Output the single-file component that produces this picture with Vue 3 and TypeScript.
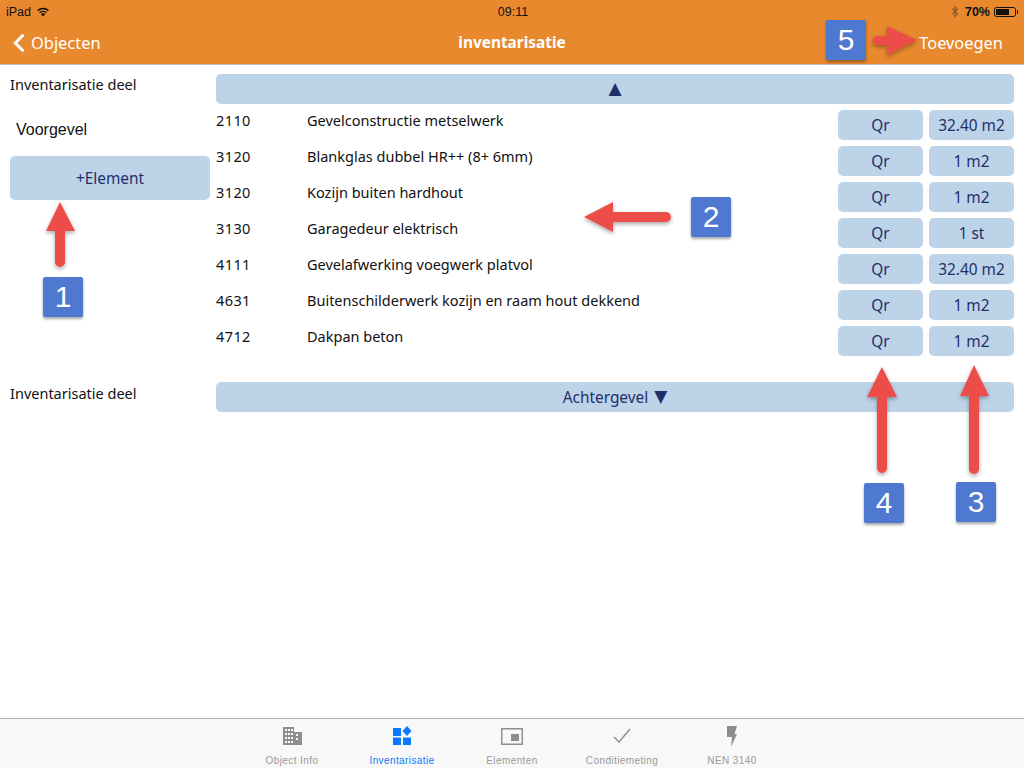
<script setup lang="ts">
interface Row { code: string; name: string; qty: string }
const rows: Row[] = [
  { code: '2110', name: 'Gevelconstructie metselwerk', qty: '32.40 m2' },
  { code: '3120', name: 'Blankglas dubbel HR++ (8+ 6mm)', qty: '1 m2' },
  { code: '3120', name: 'Kozijn buiten hardhout', qty: '1 m2' },
  { code: '3130', name: 'Garagedeur elektrisch', qty: '1 st' },
  { code: '4111', name: 'Gevelafwerking voegwerk platvol', qty: '32.40 m2' },
  { code: '4631', name: 'Buitenschilderwerk kozijn en raam hout dekkend', qty: '1 m2' },
  { code: '4712', name: 'Dakpan beton', qty: '1 m2' },
]
</script>

<template>
  <div class="page">
    <header class="header">
      <div class="status">
        <div class="st-left">
          <span>iPad</span>
          <svg width="14" height="10" viewBox="0 0 14 10"><path d="M7 9.6 4.9 7.2a3 3 0 0 1 4.2 0Z" fill="#111"/><path d="M3.6 5.8a4.9 4.9 0 0 1 6.8 0M1.6 3.6a7.8 7.8 0 0 1 10.8 0" fill="none" stroke="#111" stroke-width="1.5"/></svg>
        </div>
        <div class="st-time">09:11</div>
        <div class="st-right">
          <svg width="8" height="13" viewBox="0 0 8 13"><path d="M1 3.4 6.4 8.8 3.9 11.6V1.4L6.4 4.2 1 9.6" fill="none" stroke="#8a5a24" stroke-width="1.1"/></svg>
          <span class="pct">70%</span>
          <span class="battery"><span class="level"></span></span>
        </div>
      </div>
      <nav class="nav">
        <div class="back">
          <svg width="14" height="20" viewBox="0 0 14 20"><path d="M11.5 1.8 3.3 10l8.2 8.2" fill="none" stroke="#fff" stroke-width="3"/></svg>
          <span>Objecten</span>
        </div>
        <div class="title">inventarisatie</div>
        <div class="add">Toevoegen</div>
      </nav>
    </header>

    <main class="main">
      <aside class="side">
        <div class="side-label">Inventarisatie deel</div>
        <div class="side-name">Voorgevel</div>
        <div class="btn element">+Element</div>
        <div class="side-label second">Inventarisatie deel</div>
      </aside>
      <section class="content">
        <div class="btn bar top"><span class="tri">▲</span></div>
        <div class="rows">
          <div v-for="(r, i) in rows" :key="i" class="row">
            <span class="code">{{ r.code }}</span>
            <span class="name">{{ r.name }}</span>
            <div class="btn cell">Qr</div>
            <div class="btn cell">{{ r.qty }}</div>
          </div>
        </div>
        <div class="btn bar bottom">Achtergevel <span class="tri-small">▼</span></div>
      </section>
    </main>

    <footer class="tabs">
      <div class="tab">
        <svg width="22" height="20" viewBox="0 0 22 20"><path fill="#8e8e8e" fill-rule="evenodd" d="M2 1h11v5h8v13H2ZM4 3v2h2V3Zm3 0v2h2V3Zm3 0v2h2V3ZM4 7v2h2V7Zm3 0v2h2V7Zm3 0v2h2V7Zm5 1v2h2V8ZM4 11v2h2v-2Zm3 0v2h2v-2Zm3 0v2h2v-2Zm5 1v2h2v-2ZM4 15v2h2v-2Zm3 0v2h2v-2Zm3 0v2h2v-2Z"/></svg>
        <span>Object Info</span>
      </div>
      <div class="tab active">
        <svg width="22" height="20" viewBox="0 0 22 20"><path fill="#0a7aff" d="M2 2h8v8H2ZM2 11.500h8V19H2ZM12 11.500h8V19h-8ZM16 0l4.500 5-4.500 5-4.500-5Z"/></svg>
        <span>Inventarisatie</span>
      </div>
      <div class="tab">
        <svg width="22" height="20" viewBox="0 0 22 20"><path fill="#8e8e8e" fill-rule="evenodd" d="M0 2h22v17H0Zm1.500 1.500v14h19v-14ZM10 8h8v7h-8Z"/></svg>
        <span>Elementen</span>
      </div>
      <div class="tab">
        <svg width="22" height="20" viewBox="0 0 22 20"><path fill="none" stroke="#8e8e8e" stroke-width="1.500" d="m3 11 5 5L19 3"/></svg>
        <span>Conditiemeting</span>
      </div>
      <div class="tab">
        <svg width="22" height="20" viewBox="0 0 22 20"><path fill="#8e8e8e" d="M6 0h10l-2.500 8H16l-6 13 1-10H6Z"/></svg>
        <span>NEN 3140</span>
      </div>
    </footer>

    <svg class="arrows" width="1024" height="768" viewBox="0 0 1024 768">
      <defs>
        <filter id="sh" x="-30%" y="-30%" width="160%" height="160%">
          <feDropShadow dx="0" dy="2" stdDeviation="2" flood-color="#000" flood-opacity=".35"/>
        </filter>
      </defs>
      <g fill="#ec4e4a" filter="url(#sh)">
        <path d="M60 202 75 231H65V262a5 5 0 0 1-10 0V231H46Z"/>
        <path d="M882 367 897 397H887V468a5 5 0 0 1-10 0V397H867Z"/>
        <path d="M974 365 989 396H979V469a5 5 0 0 1-10 0V396H960Z"/>
        <path d="M584 217 613 202V212H666a5 5 0 0 1 0 10H613V232Z"/>
        <path d="M917 40 887 26V36H877a4.500 4.500 0 0 0 0 9H887V55Z"/>
      </g>
    </svg>
    <div class="badge b1">1</div>
    <div class="badge b2">2</div>
    <div class="badge b3">3</div>
    <div class="badge b4">4</div>
    <div class="badge b5">5</div>
  </div>
</template>

<style scoped>
.page {
  position: relative;
  width: 1024px;
  height: 768px;
  display: flex;
  flex-direction: column;
  overflow: hidden;
  background: #fff;
  font-family: "Noto Sans", sans-serif;
  color: #111;
}
.header {
  height: 64px;
  background: #e8892d;
  border-bottom: 1px solid #b9c0c4;
  flex: none;
}
.status {
  height: 23px;
  padding: 0 6px;
  display: grid;
  grid-template-columns: 1fr auto 1fr;
  align-items: center;
  font: 12.5px "Liberation Sans", sans-serif;
  color: #111;
}
.st-left { display: flex; align-items: center; gap: 5px; }
.st-time { padding-left: 2px; }
.st-right { display: flex; justify-content: flex-end; align-items: center; gap: 4px; }
.pct { font-weight: 700; margin-left: 2px; }
.battery {
  width: 22px;
  height: 10px;
  border: 1px solid #111;
  border-radius: 2.5px;
  padding: 1px;
  box-sizing: border-box;
  display: block;
  position: relative;
  margin-right: 2px;
}
.battery::after {
  content: "";
  position: absolute;
  right: -3px;
  top: 2px;
  width: 1.500px;
  height: 4px;
  background: #111;
}
.level { display: block; width: 70%; height: 100%; background: #111; }
.nav {
  height: 39px;
  padding: 0 21px 0 12px;
  display: flex;
  align-items: center;
  justify-content: space-between;
  position: relative;
  color: #fff;
  font-size: 16.4px;
}
.back { display: flex; align-items: center; gap: 5px; }
.title {
  position: absolute;
  left: 0;
  right: 0;
  text-align: center;
  font-weight: 700;
  font-size: 15.4px;
  pointer-events: none;
}
.main {
  flex: 1;
  display: flex;
  min-height: 0;
  font-size: 14.5px;
}
.side {
  width: 200px;
  padding: 9px 0 0 10px;
  flex: none;
}
.side-label { line-height: 20px; }
.side-name {
  margin: 24px 0 0 6px;
  height: 24px;
  font: 16px/24px "Liberation Sans", sans-serif;
}
.side-label.second { margin-top: 183px; }
.btn {
  background: #bdd3e7;
  border-radius: 5px;
  color: #1f2f6b;
  display: flex;
  align-items: center;
  justify-content: center;
  font-size: 15.4px;
}
.element { width: 200px; height: 44px; margin-top: 14px; }
.content {
  width: 798px;
  margin-left: 6px;
  padding-top: 9px;
}
.bar { height: 30px; }
.tri { font: 17px "DejaVu Sans", sans-serif; position: relative; top: -1px; }
.tri-small { font: 17px "DejaVu Sans", sans-serif; margin-left: 6px; position: relative; top: -1px; }
.rows {
  margin-top: 6px;
  display: flex;
  flex-direction: column;
  gap: 6px;
}
.row {
  display: grid;
  grid-template-columns: 91px 531px 85px 91px;
  height: 30px;
}
.code, .name { line-height: 20px; }
.code { letter-spacing: .4px; }
.name { white-space: nowrap; }
.cell { height: 30px; }
.cell:last-child { margin-left: 6px; width: 85px; }
.bottom { margin-top: 26px; }
.tabs {
  height: 50px;
  flex: none;
  box-sizing: border-box;
  border-top: 1px solid #b2b2b2;
  background: #f8f8f8;
  display: flex;
  justify-content: center;
}
.tab {
  width: 110px;
  display: flex;
  flex-direction: column;
  align-items: center;
  padding-top: 7px;
  gap: 9px;
  font: 10px "Liberation Sans", sans-serif;
  letter-spacing: .4px;
  color: #999;
}
.tab.active { color: #0a7aff; }
.arrows {
  position: absolute;
  left: 0;
  top: 0;
  pointer-events: none;
}
.badge {
  position: absolute;
  width: 40px;
  height: 40px;
  background: #4f78d0;
  border-radius: 2px;
  box-shadow: 0 2px 3px rgba(0, 0, 0, .35);
  color: #fff;
  font: 30px/40px "Liberation Sans", sans-serif;
  text-align: center;
}
.b1 { left: 43px; top: 277px; }
.b2 { left: 691px; top: 197px; }
.b3 { left: 956px; top: 482px; }
.b4 { left: 864px; top: 483px; }
.b5 { left: 826px; top: 20px; }
</style>
